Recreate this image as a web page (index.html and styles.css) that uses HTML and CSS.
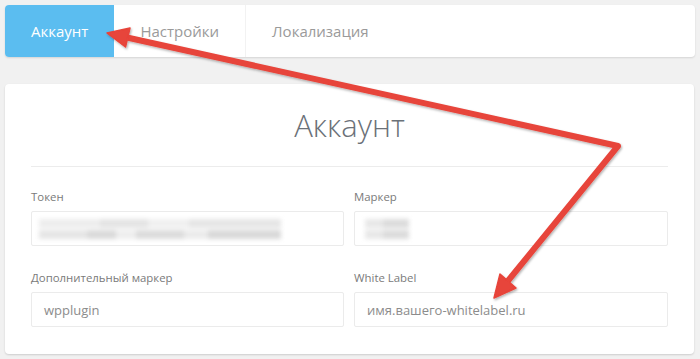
FILE: index.html
```html
<!DOCTYPE html>
<html lang="ru">
<head>
<meta charset="utf-8">
<link rel="stylesheet" href="styles.css">
</head>
<body>
<div class="page">
  <nav class="tabs">
    <div class="tab active">Аккаунт</div>
    <div class="tab">Настройки</div>
    <div class="tab last">Локализация</div>
  </nav>
  <section class="card">
    <h1 class="title">Аккаунт</h1>
    <hr class="sep">
    <div class="grid">
      <div class="field">
        <label class="label">Токен</label>
        <div class="input"><span class="blur blur-token"><i></i><i></i></span></div>
      </div>
      <div class="field">
        <label class="label">Маркер</label>
        <div class="input"><span class="blur blur-marker"><i></i><i></i></span></div>
      </div>
      <div class="field">
        <label class="label">Дополнительный маркер</label>
        <div class="input">wpplugin</div>
      </div>
      <div class="field">
        <label class="label">White Label</label>
        <div class="input">имя.вашего-whitelabel.ru</div>
      </div>
    </div>
  </section>
</div>
<svg class="arrows" width="700" height="359" viewBox="0 0 700 359">
  <defs>
    <filter id="sh" x="-10%" y="-10%" width="120%" height="120%">
      <feDropShadow dx="1" dy="1.5" stdDeviation="1.2" flood-color="#000" flood-opacity="0.3"/>
    </filter>
  </defs>
  <g filter="url(#sh)" fill="#e7443a" stroke="#e7443a">
    <polyline points="127,37.5 618,146 507,282" fill="none" stroke-width="6" stroke-linejoin="round" stroke-linecap="round"/>
    <polygon points="107,33 130,28 125.5,47" stroke-width="1.5" stroke-linejoin="round"/>
    <polygon points="494,298 516,288 500,274" stroke-width="1.5" stroke-linejoin="round"/>
  </g>
</svg>
</body>
</html>
```
FILE: styles.css
```css
* { box-sizing: border-box; }
html, body { margin: 0; padding: 0; }
body {
  width: 700px;
  height: 359px;
  background: #f1f1f1;
  font-family: "Open Sans", "Liberation Sans", sans-serif;
  overflow: hidden;
  position: relative;
}
.page {
  padding: 5px 5px 0 5px;
  display: flex;
  flex-direction: column;
  gap: 27px;
}
.tabs {
  display: flex;
  height: 52px;
  width: 690px;
  background: #fff;
  border-radius: 4px;
  box-shadow: 0 1px 2px rgba(0,0,0,0.12);
  overflow: hidden;
}
.tab {
  display: flex;
  align-items: center;
  padding: 0 26px;
  font-size: 15px;
  color: #9a9a9a;
  border-right: 1px solid #f2f2f2;
}
.tab.last { border-right: none; }
.tab.active {
  background: #5bbdf0;
  color: #fff;
  padding: 0 26px;
  border-right: none;
}
.card {
  width: 689px;
  height: 270px;
  background: #fff;
  border-radius: 4px;
  box-shadow: 0 1px 2px rgba(0,0,0,0.15);
  padding: 20px 26px 0 26px;
}
.title {
  margin: 0;
  text-align: center;
  font-weight: 300;
  font-size: 31px;
  line-height: 42px;
  color: #6b7178;
}
.sep {
  margin: 20px 0 0 0;
  border: 0;
  border-top: 1px solid #ececec;
  height: 0;
}
.grid {
  display: grid;
  grid-template-columns: 313px 314px;
  column-gap: 10px;
  row-gap: 23px;
  margin-top: 21px;
}
.field {
  display: flex;
  flex-direction: column;
  gap: 6px;
}
.label {
  font-size: 11.4px;
  line-height: 17px;
  color: #7a7a7a;
}
.input {
  height: 35px;
  border: 1px solid #ebebeb;
  border-radius: 2px;
  padding: 0 12px;
  display: flex;
  align-items: center;
  font-size: 13px;
  color: #8c8c8c;
}
.blur {
  display: flex;
  flex-direction: column;
  gap: 2px;
  filter: blur(2px);
}
.blur i {
  display: block;
  height: 9px;
  background: linear-gradient(90deg, #e6e6e6 0 20%, #dadada 20% 32%, #eeeeee 32% 40%, #dcdcdc 40% 60%, #ebebeb 60% 70%, #d9d9d9 70% 100%);
}
.blur-token { width: 242px; margin-left: -5px; }
.blur-token i:first-child { background: linear-gradient(90deg, #ededed 0 25%, #e4e4e4 25% 45%, #f0f0f0 45% 62%, #e6e6e6 62% 100%); }
.blur-marker { width: 44px; margin-left: -2px; }
.blur-marker i { background: linear-gradient(90deg, #e8e8e8 0 40%, #dcdcdc 40% 100%); }
.arrows {
  position: absolute;
  left: 0;
  top: 0;
  pointer-events: none;
}
```
